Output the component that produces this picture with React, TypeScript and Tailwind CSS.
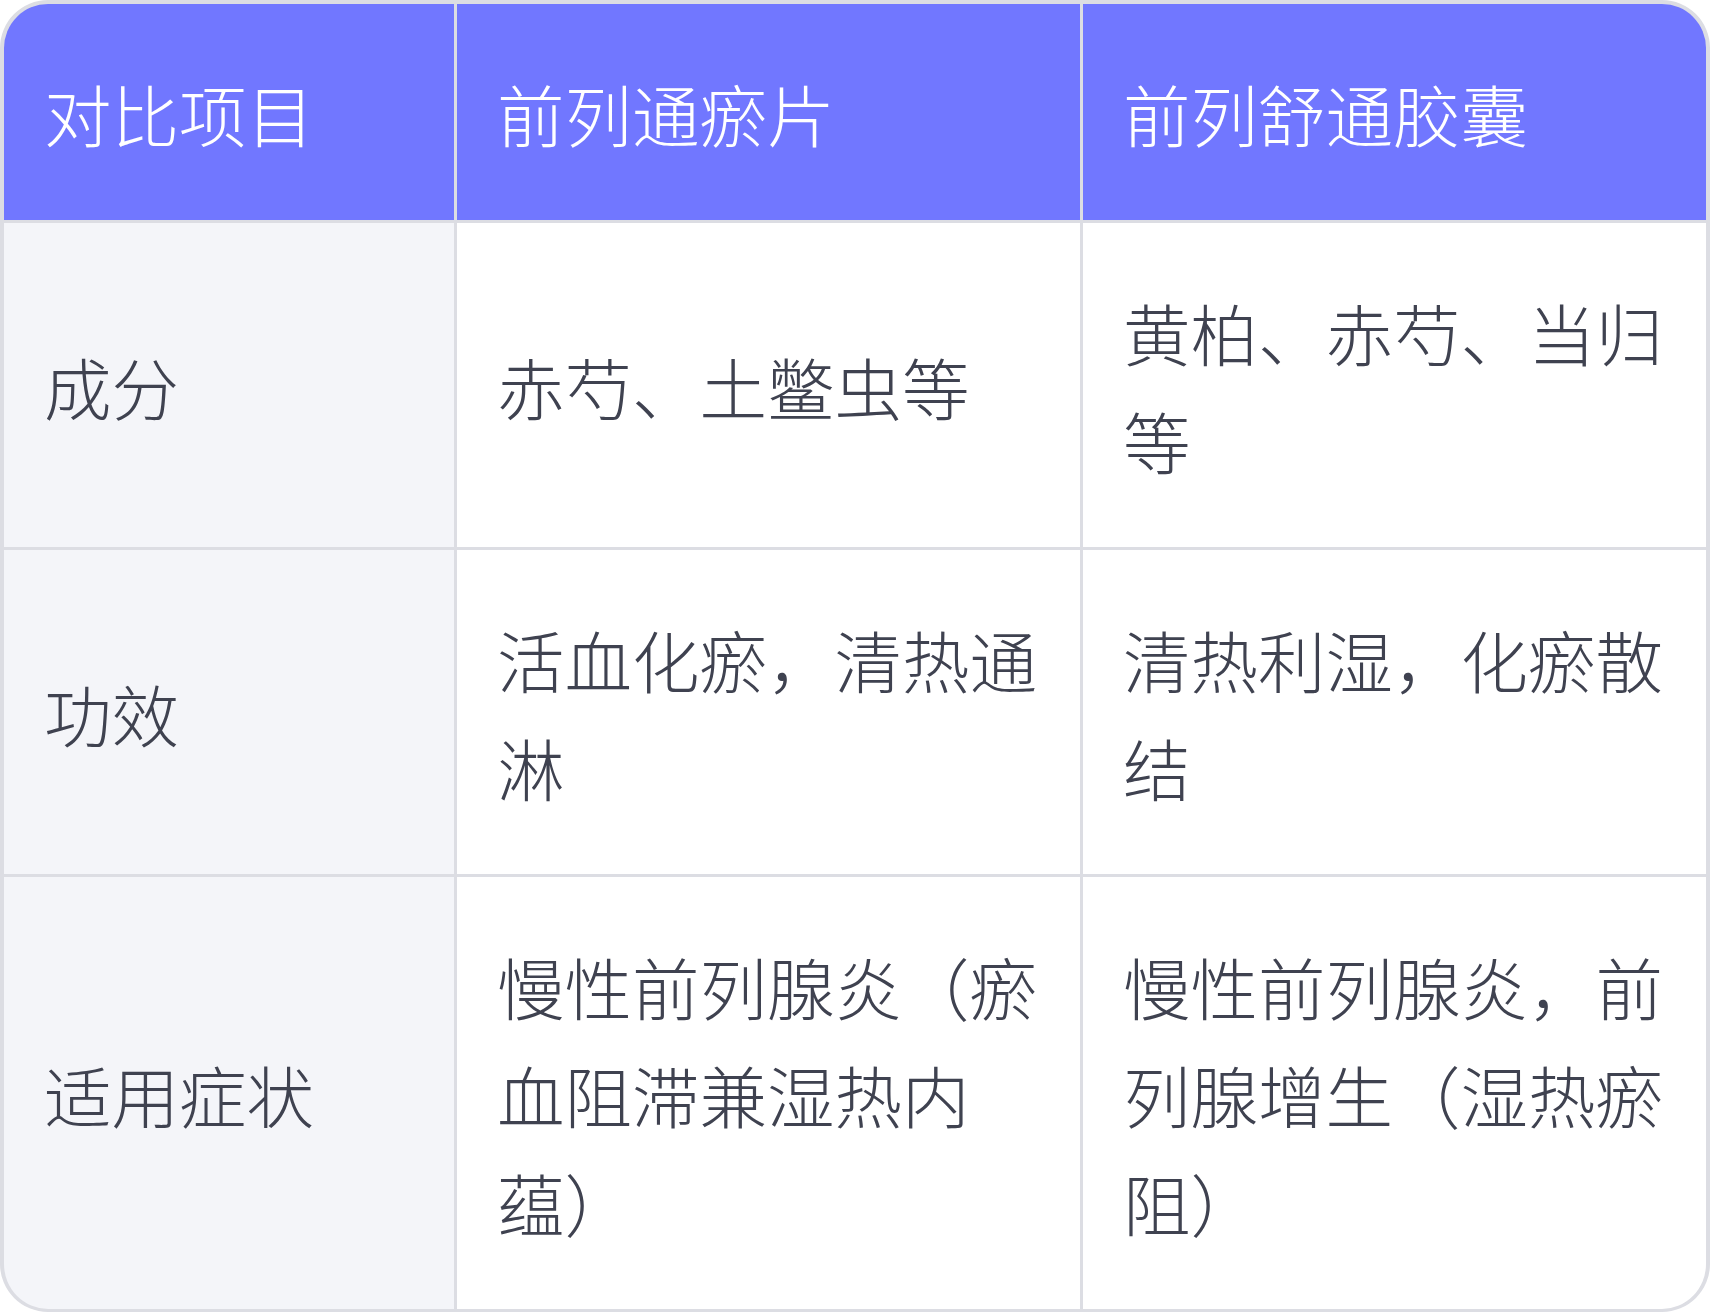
const rows = [
  { label: '成分', a: '赤芍、土鳖虫等', b: '黄柏、赤芍、当归等' },
  { label: '功效', a: '活血化瘀，清热通淋', b: '清热利湿，化瘀散结' },
  {
    label: '适用症状',
    a: '慢性前列腺炎（瘀血阻滞兼湿热内蕴）',
    b: '慢性前列腺炎，前列腺增生（湿热瘀阻）',
  },
];

const cell = 'flex items-center pl-[40px] pr-[36px] pt-[55px] pb-[53px] leading-[108px]';

export default function App() {
  return (
    <div
      className="w-[1710px] h-[1312px] overflow-hidden bg-white text-[67.5px] font-light"
      style={{ fontFamily: '"Noto Sans CJK SC", "Noto Sans", sans-serif' }}
    >
      <div className="grid grid-cols-[450px_1fr_1fr] gap-[3px] bg-[#dcdde3] border-4 border-b-[3px] border-[#dcdde3] rounded-[48px] overflow-hidden">
        {/* 表头 */}
        <div className={`${cell} bg-[#7177ff] text-white`}>对比项目</div>
        <div className={`${cell} bg-[#7177ff] text-white`}>前列通瘀片</div>
        <div className={`${cell} bg-[#7177ff] text-white`}>前列舒通胶囊</div>

        {rows.map((r) => (
          <div key={r.label} className="contents">
            <div className={`${cell} bg-[#f4f5f9] text-[#3f4250]`}>{r.label}</div>
            <div className={`${cell} bg-white text-[#3f4250]`}>{r.a}</div>
            <div className={`${cell} bg-white text-[#3f4250]`}>{r.b}</div>
          </div>
        ))}
      </div>
    </div>
  );
}
